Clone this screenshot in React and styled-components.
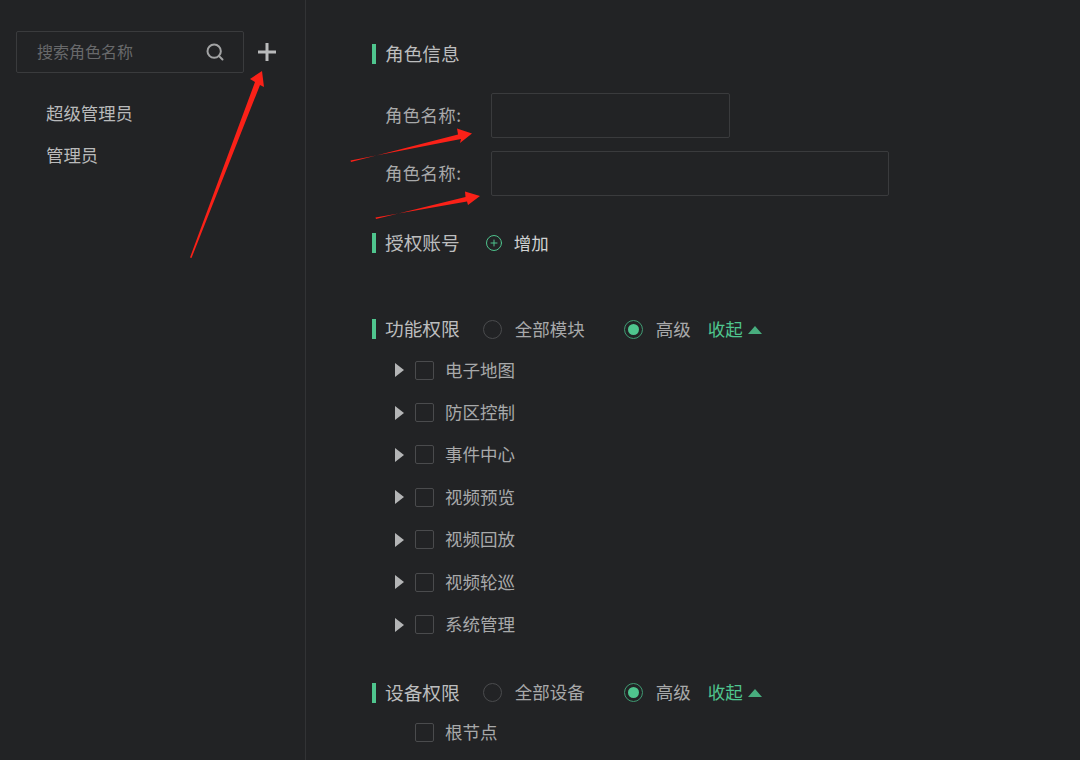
import React from 'react';
import styled, { createGlobalStyle } from 'styled-components';
import { Search, CirclePlus } from 'lucide-react';

const GREEN = '#4fc58e';
const LINE = '#3a3b3d';

const GlobalStyle = createGlobalStyle`
  html, body {
    margin: 0;
    padding: 0;
    background: #222325;
    font-family: "Noto Sans CJK SC", "Noto Sans", sans-serif;
  }
`;

const Page = styled.div`
  position: relative;
  display: flex;
  width: 1080px;
  height: 760px;
  overflow: hidden;
  background: #222325;
  color: #b4b5b6;
`;

const Sidebar = styled.aside`
  box-sizing: border-box;
  flex: 0 0 306px;
  padding: 31px 0 0 16px;
  border-right: 1px solid #323335;
`;

const SearchRow = styled.div`
  display: flex;
  align-items: center;
  gap: 12px;
`;

const SearchBox = styled.div`
  box-sizing: border-box;
  display: flex;
  align-items: center;
  width: 228px;
  height: 42px;
  padding: 0 18px 0 20px;
  border: 1px solid ${LINE};
  border-radius: 2px;
  color: #a2a3a4;
`;

const SearchInput = styled.input`
  flex: 1;
  min-width: 0;
  margin-top: -2px;
  padding: 0;
  border: none;
  outline: none;
  background: none;
  color: #b4b5b6;
  font: 16px "Noto Sans CJK SC", sans-serif;

  &::placeholder {
    color: #68696b;
    opacity: 1;
  }
`;

const AddButton = styled.button`
  display: flex;
  padding: 0;
  border: none;
  background: none;
  color: #b9babb;
`;

const RoleList = styled.ul`
  margin: 20px 0 0;
  padding: 0 0 0 30px;
  list-style: none;
`;

const RoleItem = styled.li`
  height: 42px;
  line-height: 40px;
  font-size: 17.4px;
  color: #b9babb;
`;

const Main = styled.main`
  flex: 1;
  padding: 44px 0 0 66px;
`;

const Heading = styled.div`
  display: flex;
  align-items: center;
  height: 20px;
  margin-top: ${props => props.$top || 0}px;
`;

const HeadingTitle = styled.h2`
  margin: 0;
  padding-left: 9px;
  border-left: 4px solid ${GREEN};
  height: 20px;
  line-height: 18px;
  font-size: 18.7px;
  font-weight: 400;
  color: #bcbdbe;
  white-space: nowrap;
`;

const Form = styled.div`
  display: flex;
  flex-direction: column;
  gap: 13px;
  margin-top: 29px;
  padding-left: 13px;
`;

const Field = styled.label`
  display: flex;
  align-items: center;
`;

const FieldLabel = styled.span`
  flex: 0 0 106px;
  margin-top: -2px;
  font-size: 17.4px;
  letter-spacing: 0.4px;
  color: #a8a9aa;
`;

const TextInput = styled.input`
  box-sizing: border-box;
  width: ${props => props.$width}px;
  height: 45px;
  border: 1px solid ${LINE};
  border-radius: 2px;
  outline: none;
  background: none;
`;

const RowText = styled.span`
  margin-top: -2px;
`;

const AddLink = styled.span`
  display: flex;
  align-items: center;
  gap: 11px;
  margin-left: 25px;
  font-size: 17.5px;
  color: #d0d1d2;

  svg {
    color: ${GREEN};
  }
`;

const RadioOption = styled.span`
  display: flex;
  align-items: center;
  gap: 13px;
  margin-left: ${props => props.$left}px;
  font-size: 17.5px;
  color: #a8a9aa;
  white-space: nowrap;
`;

const RadioDot = styled.span`
  box-sizing: border-box;
  display: flex;
  align-items: center;
  justify-content: center;
  width: 19px;
  height: 19px;
  border: 1px solid ${props => (props.$on ? '#3f9a72' : '#4a4b4d')};
  border-radius: 50%;

  &::after {
    content: '';
    display: ${props => (props.$on ? 'block' : 'none')};
    width: 11px;
    height: 11px;
    border-radius: 50%;
    background: ${GREEN};
  }
`;

const Collapse = styled.span`
  display: flex;
  align-items: center;
  gap: 5px;
  margin-left: 17px;
  font-size: 17.5px;
  color: ${GREEN};
  white-space: nowrap;

  &::after {
    content: '';
    width: 0;
    height: 0;
    margin-top: 1px;
    border-left: 7px solid transparent;
    border-right: 7px solid transparent;
    border-bottom: 8px solid ${GREEN};
    opacity: 0.85;
  }
`;

const Tree = styled.div`
  margin-top: ${props => props.$top}px;
  padding-left: 23px;
`;

const TreeRow = styled.div`
  display: flex;
  align-items: center;
  height: 42.4px;
  font-size: 17.5px;
  color: #a8a9aa;
`;

const Caret = styled.span`
  flex: 0 0 20px;
  box-sizing: border-box;
  width: 20px;
  height: 14px;

  &::before {
    content: '';
    display: ${props => (props.$hidden ? 'none' : 'block')};
    width: 0;
    height: 0;
    border-top: 7px solid transparent;
    border-bottom: 7px solid transparent;
    border-left: 9px solid #b4b5b6;
  }
`;

const CheckBox = styled.span`
  box-sizing: border-box;
  flex: 0 0 19px;
  height: 19px;
  margin-right: 11px;
  border: 1px solid #4a4b4d;
  border-radius: 2px;
`;

const Annotations = styled.svg`
  position: absolute;
  top: 0;
  left: 0;
  width: 1080px;
  height: 760px;
  pointer-events: none;
`;

const modules = ['电子地图', '防区控制', '事件中心', '视频预览', '视频回放', '视频轮巡', '系统管理'];

const PermissionHeading = ({ title, allLabel, top }) => (
  <Heading $top={top}>
    <HeadingTitle>{title}</HeadingTitle>
    <RadioOption $left={23}><RadioDot /><RowText>{allLabel}</RowText></RadioOption>
    <RadioOption $left={39}><RadioDot $on /><RowText>高级</RowText></RadioOption>
    <Collapse><RowText>收起</RowText></Collapse>
  </Heading>
);

const App = () => (
  <Page>
    <GlobalStyle />
    <Sidebar>
      <SearchRow>
        <SearchBox>
          <SearchInput placeholder="搜索角色名称" />
          <Search size={20} strokeWidth={2.4} />
        </SearchBox>
        <AddButton type="button">
          <svg width="22" height="22" viewBox="0 0 22 22">
            <path d="M11 2v18M2 11h18" stroke="currentColor" strokeWidth="3" fill="none" />
          </svg>
        </AddButton>
      </SearchRow>
      <RoleList>
        <RoleItem>超级管理员</RoleItem>
        <RoleItem>管理员</RoleItem>
      </RoleList>
    </Sidebar>
    <Main>
      <Heading>
        <HeadingTitle>角色信息</HeadingTitle>
      </Heading>
      <Form>
        <Field>
          <FieldLabel>角色名称:</FieldLabel>
          <TextInput $width={239} />
        </Field>
        <Field>
          <FieldLabel>角色名称:</FieldLabel>
          <TextInput $width={398} />
        </Field>
      </Form>
      <Heading $top={37}>
        <HeadingTitle>授权账号</HeadingTitle>
        <AddLink><CirclePlus size={18} strokeWidth={1.3} /><RowText>增加</RowText></AddLink>
      </Heading>
      <PermissionHeading title="功能权限" allLabel="全部模块" top={66} />
      <Tree $top={10}>
        {modules.map(name => (
          <TreeRow key={name}>
            <Caret />
            <CheckBox />
            <RowText>{name}</RowText>
          </TreeRow>
        ))}
      </Tree>
      <PermissionHeading title="设备权限" allLabel="全部设备" top={37} />
      <Tree $top={9}>
        <TreeRow>
          <Caret $hidden />
          <CheckBox />
          <RowText>根节点</RowText>
        </TreeRow>
      </Tree>
    </Main>
    <Annotations viewBox="0 0 1080 760">
      <polygon fill="#fa2118" points="190,257.5 191.5,258 260,85 264,87 262,71 250,79 255,82" />
      <polygon fill="#fa2118" points="350.5,160.5 351,162 458,134.5 457,128.5 472,133.5 460,143 461,139" />
      <polygon fill="#fa2118" points="375.5,217.5 376,219 465.5,197 465,191.5 480,196 468,205 467,201.5" />
    </Annotations>
  </Page>
);

export default App;
